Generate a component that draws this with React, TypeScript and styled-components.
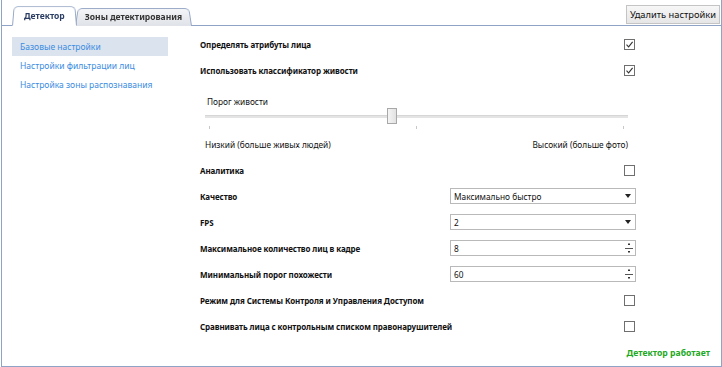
import React, { useState } from "react";
import styled, { createGlobalStyle } from "styled-components";

const GlobalStyle = createGlobalStyle`
  html, body {
    margin: 0;
    padding: 0;
    background: #ffffff;
  }
  body {
    font-family: "Noto Sans", "Open Sans", sans-serif;
    font-size: 8.3px;
    color: #111111;
  }
`;

const Frame = styled.div`
  position: relative;
  box-sizing: border-box;
  width: 721px;
  height: 367px;
  margin-left: 1px;
  border-left: 1px solid #8fa3c7;
  border-right: 1px solid #8fa3c7;
  border-bottom: 1px solid #8fa3c7;
  display: flex;
  flex-direction: column;
  overflow: hidden;
`;

const Header = styled.div`
  display: flex;
  align-items: flex-end;
  height: 26px;
  box-sizing: border-box;
  border-bottom: 1px solid #8fa3c7;
  padding-left: 10px;
  padding-right: 1px;
`;

const Tab = styled.div<{ $active?: boolean }>`
  position: relative;
  height: ${(p) => (p.$active ? 21 : 19)}px;
  padding: 0 ${(p) => (p.$active ? 12 : 10)}px;
  margin-right: ${(p) => (p.$active ? -2 : 0)}px;
  margin-bottom: -1px;
  z-index: ${(p) => (p.$active ? 2 : 1)};
  display: flex;
  align-items: center;
  font-weight: 700;
  font-size: 8.5px;
  color: ${(p) => (p.$active ? "#2b3d63" : "#333333")};

  &::before {
    content: "";
    position: absolute;
    inset: 0;
    z-index: -1;
    border: 1px solid #97a8c6;
    border-bottom: ${(p) => (p.$active ? "1px solid #ffffff" : "none")};
    border-radius: 5px 5px 0 0;
    background: ${(p) =>
      p.$active ? "#ffffff" : "linear-gradient(#f4f5f7, #dfe2e8)"};
    transform: perspective(40px) rotateX(6deg);
    transform-origin: bottom;
  }
`;

const HeaderSpacer = styled.div`
  flex: 1;
`;

const DeleteButton = styled.button`
  align-self: flex-start;
  margin-top: 5px;
  height: 19px;
  padding: 0 3px;
  border: 1px solid #c4c4c4;
  background: linear-gradient(#f7f7f7, #e6e6e6);
  font-family: inherit;
  font-size: 9.3px;
  color: #111111;
  cursor: pointer;
`;

const Body = styled.div`
  display: flex;
  flex: 1;
`;

const SideNav = styled.nav`
  width: 156px;
  margin-left: 10px;
  padding-top: 11px;
  display: flex;
  flex-direction: column;
`;

const NavItem = styled.div<{ $selected?: boolean }>`
  height: 19px;
  display: flex;
  align-items: center;
  padding-left: 8px;
  font-size: 8.5px;
  color: #3b8de2;
  background: ${(p) => (p.$selected ? "#dbe3ee" : "transparent")};
  cursor: pointer;
`;

const Main = styled.div`
  flex: 1;
  display: flex;
  flex-direction: column;
`;

const Settings = styled.div`
  width: 436px;
  margin-left: 32px;
  padding-top: 5px;
  display: flex;
  flex-direction: column;
`;

const Row = styled.div`
  height: 26px;
  display: flex;
  align-items: center;
  justify-content: space-between;
`;

const Label = styled.span`
  font-weight: 700;
  font-size: 8px;
  letter-spacing: -0.1px;
  color: #111111;
`;

const CheckBox = styled.span`
  width: 9px;
  height: 9px;
  margin-right: 1px;
  border: 1px solid #6f6f6f;
  background: #ffffff;
  display: flex;
  align-items: center;
  justify-content: center;
`;

const SliderBlock = styled.div`
  height: 74px;
  padding: 13px 8px 0 5px;
  box-sizing: border-box;
  display: flex;
  flex-direction: column;
`;

const SliderCaption = styled.div`
  height: 12px;
  line-height: 12px;
  padding-left: 2px;
`;

const Track = styled.div`
  position: relative;
  height: 16px;
  display: flex;
  align-items: center;
`;

const TrackLine = styled.div`
  flex: 1;
  height: 2px;
  background: #e4e4e4;
  border-top: 1px solid #d6d6d6;
`;

const Thumb = styled.div`
  position: absolute;
  top: 0;
  width: 8px;
  height: 14px;
  border: 1px solid #a8a8a8;
  background: linear-gradient(90deg, #f4f4f4, #e2e2e2);
`;

const Ticks = styled.div`
  height: 6px;
  display: flex;
  justify-content: space-between;
  align-items: center;
  padding: 0 4px;
`;

const Tick = styled.span`
  width: 1px;
  height: 3px;
  background: #c8c8c8;
`;

const ScaleLabels = styled.div`
  margin-top: 9px;
  display: flex;
  justify-content: space-between;
`;

const Field = styled.div`
  width: 186px;
  height: 16px;
  box-sizing: border-box;
  border: 1px solid #b9b9b9;
  display: flex;
  align-items: center;
  justify-content: space-between;
  padding-left: 3px;
  background: #ffffff;
`;

const FieldText = styled.span`
  color: #111111;
`;

const Arrow = styled.span`
  width: 0;
  height: 0;
  margin-right: 4px;
  border-left: 3px solid transparent;
  border-right: 3px solid transparent;
  border-top: 4px solid #222222;
`;

const Spin = styled.span`
  width: 10px;
  height: 14px;
  display: flex;
  align-items: center;
  justify-content: center;
  margin-right: 1px;
`;

const Status = styled.div`
  margin-top: auto;
  height: 26px;
  display: flex;
  align-items: center;
  justify-content: flex-end;
  padding-right: 11px;
  font-weight: 700;
  font-size: 8.6px;
  color: #23a823;
`;

const CheckMark = () => (
  <svg width="9" height="9" viewBox="0 0 9 9">
    <path d="M1.5 4.6 L3.6 6.8 L7.6 1.8" fill="none" stroke="#333" strokeWidth="1.1" />
  </svg>
);

const SpinIcon = () => (
  <svg width="10" height="13" viewBox="0 0 10 13">
    <path d="M4 2 L6 2 L5 1 Z" fill="#333" />
    <rect x="4" y="2" width="2" height="1" fill="#333" />
    <rect x="1" y="6" width="8" height="1" fill="#555" />
    <rect x="4" y="9" width="2" height="1" fill="#333" />
    <path d="M4 10 L6 10 L5 11 Z" fill="#333" />
  </svg>
);

const Check = ({ checked }: { checked?: boolean }) => (
  <CheckBox>{checked && <CheckMark />}</CheckBox>
);

const Select = ({ value }: { value: string }) => (
  <Field>
    <FieldText>{value}</FieldText>
    <Arrow />
  </Field>
);

const NumberBox = ({ value }: { value: number }) => (
  <Field>
    <FieldText>{value}</FieldText>
    <Spin>
      <SpinIcon />
    </Spin>
  </Field>
);

const navItems = [
  "Базовые настройки",
  "Настройки фильтрации лиц",
  "Настройка зоны распознавания",
];

const App: React.FC = () => {
  const [selected, setSelected] = useState(0);
  const threshold = 0.44;

  return (
    <>
      <GlobalStyle />
      <Frame>
        <Header>
          <Tab $active>Детектор</Tab>
          <Tab>Зоны детектирования</Tab>
          <HeaderSpacer />
          <DeleteButton>Удалить настройки</DeleteButton>
        </Header>
        <Body>
          <SideNav>
            {navItems.map((item, i) => (
              <NavItem key={item} $selected={i === selected} onClick={() => setSelected(i)}>
                {item}
              </NavItem>
            ))}
          </SideNav>
          <Main>
            <Settings>
              <Row>
                <Label>Определять атрибуты лица</Label>
                <Check checked />
              </Row>
              <Row>
                <Label>Использовать классификатор живости</Label>
                <Check checked />
              </Row>
              <SliderBlock>
                <SliderCaption>Порог живости</SliderCaption>
                <Track>
                  <TrackLine />
                  <Thumb style={{ left: `calc(${threshold * 100}% - 4px)` }} />
                </Track>
                <Ticks>
                  <Tick />
                  <Tick />
                  <Tick />
                </Ticks>
                <ScaleLabels>
                  <span>Низкий (больше живых людей)</span>
                  <span>Высокий (больше фото)</span>
                </ScaleLabels>
              </SliderBlock>
              <Row>
                <Label>Аналитика</Label>
                <Check />
              </Row>
              <Row>
                <Label>Качество</Label>
                <Select value="Максимально быстро" />
              </Row>
              <Row>
                <Label>FPS</Label>
                <Select value="2" />
              </Row>
              <Row>
                <Label>Максимальное количество лиц в кадре</Label>
                <NumberBox value={8} />
              </Row>
              <Row>
                <Label>Минимальный порог похожести</Label>
                <NumberBox value={60} />
              </Row>
              <Row>
                <Label>Режим для Системы Контроля и Управления Доступом</Label>
                <Check />
              </Row>
              <Row>
                <Label>Сравнивать лица с контрольным списком правонарушителей</Label>
                <Check />
              </Row>
            </Settings>
            <Status>Детектор работает</Status>
          </Main>
        </Body>
      </Frame>
    </>
  );
};

export default App;
